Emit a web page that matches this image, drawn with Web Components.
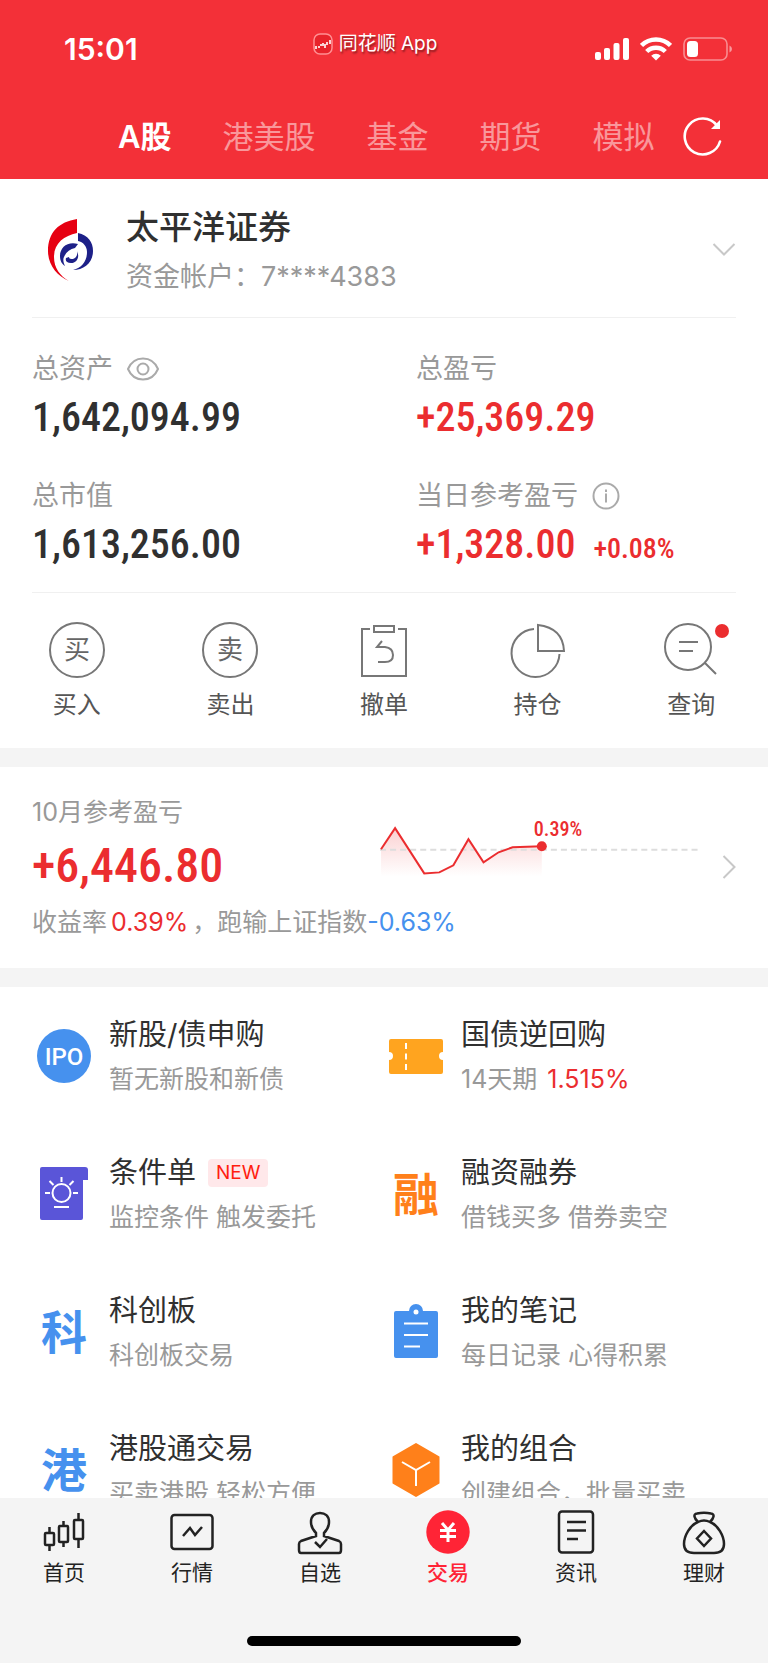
<!DOCTYPE html>
<html lang="zh-CN">
<head>
<meta charset="utf-8">
<meta name="viewport" content="width=device-width, initial-scale=1">
<title>交易</title>
<style>
  :root {
    --brand: #f33038;
    --up: #eb2d2f;
    --down: #4691ee;
    --ink: #303030;
    --muted: #999;
    --line: #f0f0f0;
    --band: #f4f4f4;
    --text: Inter, "Noto Sans CJK SC", sans-serif;
    --figures: "Roboto Condensed", Roboto, "Noto Sans CJK SC", sans-serif;
  }

  body {
    margin: 0;
    font-family: var(--text);
    color: var(--ink);
  }
</style>
</head>
<body>
<trade-page>
  <status-bar slot="header" time="15:01" app="同花顺 App"></status-bar>
  <market-tabs slot="header" items="A股,港美股,基金,期货,模拟"></market-tabs>

  <broker-card>
    <span slot="name">太平洋证券</span>
    <span slot="account">资金帐户：7****4383</span>
  </broker-card>

  <asset-grid>
    <asset-figure icon="eye">
      <span slot="label">总资产</span>1,642,094.99
    </asset-figure>
    <asset-figure trend="up">
      <span slot="label">总盈亏</span>+25,369.29
    </asset-figure>
    <asset-figure>
      <span slot="label">总市值</span>1,613,256.00
    </asset-figure>
    <asset-figure trend="up" icon="info">
      <span slot="label">当日参考盈亏</span>+1,328.00<span slot="extra">+0.08%</span>
    </asset-figure>
  </asset-grid>

  <action-row>
    <quick-action icon="buy">买入</quick-action>
    <quick-action icon="sell">卖出</quick-action>
    <quick-action icon="cancel">撤单</quick-action>
    <quick-action icon="position">持仓</quick-action>
    <quick-action icon="query" dot>查询</quick-action>
  </action-row>

  <profit-card>
    <span slot="label">10月参考盈亏</span>
    <span slot="value">+6,446.80</span>
    <span slot="rate">0.39%</span>
    <span slot="index">-0.63%</span>
  </profit-card>

  <feature-grid>
    <feature-item icon="ipo">新股/债申购<span slot="note">暂无新股和新债</span></feature-item>
    <feature-item icon="ticket">国债逆回购<span slot="note">14天期</span><span slot="rate">1.515%</span></feature-item>
    <feature-item icon="bulb" badge="NEW">条件单<span slot="note">监控条件 触发委托</span></feature-item>
    <feature-item icon="rong">融资融券<span slot="note">借钱买多 借券卖空</span></feature-item>
    <feature-item icon="ke">科创板<span slot="note">科创板交易</span></feature-item>
    <feature-item icon="notes">我的笔记<span slot="note">每日记录 心得积累</span></feature-item>
    <feature-item icon="gang">港股通交易<span slot="note">买卖港股 轻松方便</span></feature-item>
    <feature-item icon="cube">我的组合<span slot="note">创建组合，批量买卖</span></feature-item>
  </feature-grid>

  <tab-bar slot="footer">
    <tab-item icon="home">首页</tab-item>
    <tab-item icon="quotes">行情</tab-item>
    <tab-item icon="watch">自选</tab-item>
    <tab-item icon="trade" active>交易</tab-item>
    <tab-item icon="news">资讯</tab-item>
    <tab-item icon="wealth">理财</tab-item>
  </tab-bar>
</trade-page>

<script>
const base = `
  * {
    box-sizing: border-box;
  }

  :host {
    display: block;
  }

  svg {
    display: block;
    flex: none;
  }

  button {
    margin: 0;
    padding: 0;
    border: 0;
    background: none;
    font: inherit;
    color: inherit;
    cursor: pointer;
  }

  a {
    color: inherit;
    text-decoration: none;
  }
`;

// every element renders once, from its attributes
class BaseElement extends HTMLElement {
  constructor() {
    super();
    this.attachShadow({ mode: "open" });
  }

  connectedCallback() {
    this.shadowRoot.innerHTML = `<style>${base}${this.styles()}</style>${this.render()}`;
  }
}

class TradePage extends BaseElement {
  styles() {
    return `
      :host {
        display: flex;
        flex-direction: column;
        height: 100vh;
        background: #fff;
      }

      header {
        flex: none;
        padding-bottom: 3px;
        background: var(--brand);
        color: #fff;
      }

      main {
        flex: 1;
        min-height: 0;
        overflow-y: auto;
        scrollbar-width: none;
      }

      footer {
        flex: none;
      }
    `;
  }

  render() {
    return `
      <header><slot name="header"></slot></header>
      <main><slot></slot></main>
      <footer><slot name="footer"></slot></footer>
    `;
  }
}

class StatusBar extends BaseElement {
  styles() {
    return `
      :host {
        display: grid;
        grid-template-columns: 1fr auto 1fr;
        align-items: center;
        height: 98px;
        padding: 0 36px;
      }

      time {
        padding-left: 28px;
        font-size: 30px;
        font-weight: 600;
        line-height: 40px;
      }

      .app {
        display: flex;
        align-items: center;
        gap: 6px;
        padding: 0 18px 10px 0;
        font-size: 19px;
        line-height: 28px;
        text-shadow: 1px 2px 2px rgba(0, 0, 0, 0.45);
      }

      .signals {
        display: flex;
        justify-content: flex-end;
        align-items: center;
        gap: 11px;
      }
    `;
  }

  render() {
    return `
      <time>${this.getAttribute("time")}</time>
      <div class="app">
        <svg width="20" height="22" viewBox="0 0 20 22" fill="none">
          <rect x="1" y="1" width="18" height="20" rx="6" fill="#e8232b" stroke="#ff8f92" stroke-width="1.5"/>
          <path d="M3 13v3M6 13v2M8 11v2M10 10v3M12 11v4M14 9v3M17 7v4" stroke="#fff" stroke-width="1.6"/>
        </svg>
        <span>${this.getAttribute("app")}</span>
      </div>
      <div class="signals">
        <svg width="34" height="24" viewBox="0 0 34 24" fill="#fff">
          <rect x="0" y="15" width="6" height="8" rx="2"/>
          <rect x="9" y="11" width="6" height="12" rx="2"/>
          <rect x="18.500" y="6" width="6" height="17" rx="2"/>
          <rect x="28" y="1" width="6" height="22" rx="2"/>
        </svg>
        <svg width="32" height="24" viewBox="0 0 32 24" fill="none" stroke="#fff" stroke-width="4.500">
          <path d="M1.500 8.500a20.500 20.500 0 0 1 29 0"/>
          <path d="M6.700 14.500a13.200 13.200 0 0 1 18.600 0"/>
          <path d="M16 23.500l-4.800-4.800a6.800 6.800 0 0 1 9.600 0z" fill="#fff" stroke="none"/>
        </svg>
        <svg width="49" height="24" viewBox="0 0 49 24">
          <rect x="1" y="1" width="43" height="22" rx="6" fill="none" stroke="#fff" stroke-opacity=".45" stroke-width="1.600"/>
          <rect x="4" y="4" width="11" height="16" rx="3.500" fill="#fff"/>
          <path d="M46.500 8.500q2.500 1 2.500 3.500t-2.500 3.500z" fill="#fff" fill-opacity=".5"/>
        </svg>
      </div>
    `;
  }
}

class MarketTabs extends BaseElement {
  styles() {
    return `
      :host {
        display: flex;
        align-items: center;
        justify-content: space-between;
        height: 78px;
        padding: 0 45px 0 118px;
      }

      nav {
        display: flex;
        gap: 51px;
      }

      nav button {
        font-size: 31px;
        line-height: 44px;
        color: rgba(255, 255, 255, 0.5);
        white-space: nowrap;
      }

      nav button[aria-current] {
        color: #fff;
        font-weight: 600;
      }
    `;
  }

  render() {
    const tabs = this.getAttribute("items").split(",");
    return `
      <nav>
        ${tabs.map((name, i) => `<button type="button"${i ? "" : ' aria-current="page"'}>${name}</button>`).join("")}
      </nav>
      <button type="button" aria-label="刷新">
        <svg width="40" height="40" viewBox="0 0 40 40" fill="none" stroke="#fff" stroke-width="2.600">
          <path d="M37 24.500A18 18 0 1 1 34 8.500" stroke-linecap="round"/>
          <path d="M37 3v9h-9z" fill="#fff" stroke="none"/>
        </svg>
      </button>
    `;
  }
}

class BrokerCard extends BaseElement {
  styles() {
    return `
      .card {
        display: flex;
        align-items: center;
        margin: 0 32px;
        padding: 24px 0 14px;
        border-bottom: 1px solid var(--line);
      }

      .logo {
        margin: 0 32px 0 14px;
      }

      .who {
        flex: 1;
      }

      .name {
        font-size: 33px;
        font-weight: 500;
        line-height: 48px;
      }

      .account {
        font-size: 27px;
        line-height: 52px;
        color: var(--muted);
      }
    `;
  }

  render() {
    return `
      <div class="card">
        <svg class="logo" width="48" height="70" viewBox="0 0 48 70">
          <path fill="#e60012" d="M31 1v14C18 18 8 25 8 39c0 11 6 19 15 24C11 58 2 47 2 33 2 14 13 4 31 1z"/>
          <path fill="#1d2088" d="M32 15c10 2 15 9 15 18 0 12-9 19-20 19 9-2 14-9 14-18 0-6-4-10-9-11z"/>
          <path fill="#1d2088" d="M32 26c-10-3-18 3-18 12 0 5 2 8 5 10-2-4-2-7-1-9 2-5 6-8 11-9z"/>
          <path fill="#1d2088" d="M31 33c3 6 0 12-6 12-4 0-6-2-5-5l3-1c0 2 2 2 4 2 3-1 5-4 4-8z"/>
        </svg>
        <div class="who">
          <div class="name"><slot name="name"></slot></div>
          <div class="account"><slot name="account"></slot></div>
        </div>
        <button type="button" aria-label="切换账户">
          <svg width="24" height="24" viewBox="0 0 24 24" fill="none" stroke="#c8c8c8" stroke-width="2">
            <path d="M1.500 3L12 13.500 22.500 3"/>
          </svg>
        </button>
      </div>
    `;
  }
}

class AssetGrid extends BaseElement {
  styles() {
    return `
      .grid {
        display: grid;
        grid-template-columns: 1fr 1fr;
        row-gap: 34px;
        padding: 31px 0 23px;
      }

      .rule {
        margin: 0 32px;
        border-bottom: 1px solid var(--line);
      }
    `;
  }

  render() {
    return `<div class="grid"><slot></slot></div><div class="rule"></div>`;
  }
}

const figureIcons = {
  eye: ["显示资产", `
    <svg width="32" height="24" viewBox="0 0 32 24" fill="none" stroke="#aaa" stroke-width="2">
      <path d="M1 12C4 5 9.500 1.500 16 1.500S28 5 31 12c-3 7-8.500 10.500-15 10.500S4 19 1 12z"/>
      <circle cx="16" cy="12" r="5.500"/>
    </svg>`],
  info: ["说明", `
    <svg width="28" height="28" viewBox="0 0 28 28" fill="none" stroke="#aaa" stroke-width="2">
      <circle cx="14" cy="14" r="12.500"/>
      <path d="M14 11.500v9M14 7.500v2.500"/>
    </svg>`],
};

class AssetFigure extends BaseElement {
  styles() {
    return `
      :host {
        padding-left: 32px;
      }

      .label {
        display: flex;
        align-items: center;
        gap: 14px;
        margin-bottom: 5px;
        font-size: 27px;
        line-height: 40px;
        color: var(--muted);
      }

      .value {
        display: flex;
        align-items: baseline;
        gap: 18px;
        font-family: var(--figures);
        font-size: 40px;
        font-weight: 500;
        line-height: 48px;
      }

      .extra {
        font-size: 28px;
        line-height: 36px;
      }

      :host([trend="up"]) .value {
        color: var(--up);
      }
    `;
  }

  render() {
    const [name, svg] = figureIcons[this.getAttribute("icon")] || [];
    return `
      <div class="label">
        <slot name="label"></slot>
        ${svg ? `<button type="button" aria-label="${name}">${svg}</button>` : ""}
      </div>
      <div class="value">
        <span><slot></slot></span>
        <span class="extra"><slot name="extra"></slot></span>
      </div>
    `;
  }
}

class ActionRow extends BaseElement {
  styles() {
    return `
      :host {
        display: grid;
        grid-template-columns: repeat(5, 1fr);
        padding: 27px 0 26px;
      }
    `;
  }

  render() {
    return `<slot></slot>`;
  }
}

const actionIcons = {
  buy: `<circle cx="30" cy="30" r="27"/><text x="30" y="39">买</text>`,
  sell: `<circle cx="30" cy="30" r="27"/><text x="30" y="39">卖</text>`,
  cancel: `
    <path d="M16 9H8v47h44V9h-8"/>
    <rect x="20" y="6" width="20" height="6"/>
    <path d="M28 21l-5 6h8q8 1 8 8t-8 7h-7"/>`,
  position: `
    <path d="M26 9a24 24 0 1 0 25.500 25"/>
    <path d="M30 5v26h26Q55 8 30 5z"/>`,
  query: `
    <circle cx="27" cy="27" r="23"/>
    <path d="M44 43l11 11M18 22h19M18 31h14"/>`,
};

class QuickAction extends BaseElement {
  styles() {
    return `
      button {
        position: relative;
        display: flex;
        flex-direction: column;
        align-items: center;
        gap: 8px;
        margin: 0 auto;
        font-size: 24px;
        line-height: 34px;
        color: #555;
      }

      text {
        font-size: 26px;
        text-anchor: middle;
        fill: #666;
        stroke: none;
      }

      .dot {
        position: absolute;
        top: 4px;
        right: -8px;
        width: 14px;
        height: 14px;
        border-radius: 50%;
        background: var(--up);
      }
    `;
  }

  render() {
    return `
      <button type="button">
        <svg width="60" height="60" viewBox="0 0 60 60" fill="none" stroke="#777" stroke-width="2">
          ${actionIcons[this.getAttribute("icon")]}
        </svg>
        <span><slot></slot></span>
        ${this.hasAttribute("dot") ? `<i class="dot"></i>` : ""}
      </button>
    `;
  }
}

class ProfitCard extends BaseElement {
  styles() {
    return `
      :host {
        display: flex;
        align-items: center;
        gap: 20px;
        padding: 27px 32px 28px;
        border: solid var(--band);
        border-width: 19px 0;
      }

      .body {
        flex: 1;
      }

      .top {
        display: grid;
        grid-template-columns: 13fr 12fr;
        align-items: start;
      }

      .label {
        font-size: 25px;
        line-height: 36px;
        color: var(--muted);
      }

      .value {
        margin: 12px 0 14px;
        font-family: var(--figures);
        font-size: 48px;
        font-weight: 500;
        line-height: 48px;
        color: var(--up);
      }

      .summary {
        font-size: 25px;
        line-height: 36px;
        color: var(--muted);
      }

      .up {
        margin: 0 4px;
        color: var(--up);
      }

      .down {
        color: var(--down);
      }

      .chart {
        width: 100%;
        height: auto;
      }

      .chart text {
        font-family: var(--figures);
        font-size: 20px;
        font-weight: 500;
        fill: var(--up);
      }
    `;
  }

  render() {
    const line = "1,55 15,34 44,79 59,78 73,71 88,45 103,68 118,58 132,53 161,52";
    return `
      <div class="body">
        <div class="top">
          <div>
            <div class="label"><slot name="label"></slot></div>
            <div class="value"><slot name="value"></slot></div>
          </div>
          <svg class="chart" viewBox="0 0 320 96" fill="none">
            <linearGradient id="fade" x1="0" y1="0" x2="0" y2="1">
              <stop offset="0" stop-color="#eb2d2f" stop-opacity=".22"/>
              <stop offset="1" stop-color="#eb2d2f" stop-opacity="0"/>
            </linearGradient>
            <polygon points="${line} 161,82 1,82" fill="url(#fade)"/>
            <path d="M0 55.500h320" stroke="#ddd" stroke-width="2" stroke-dasharray="6 4"/>
            <polyline points="${line}" stroke="#eb2d2f" stroke-width="2"/>
            <circle cx="161" cy="52" r="5" fill="#eb2d2f"/>
            <text x="153" y="42">0.39%</text>
          </svg>
        </div>
        <div class="summary">收益率<span class="up"><slot name="rate"></slot></span>，跑输上证指数<span class="down"><slot name="index"></slot></span></div>
      </div>
      <button type="button" aria-label="查看详情">
        <svg width="14" height="26" viewBox="0 0 14 26" fill="none" stroke="#c8c8c8" stroke-width="2">
          <path d="M1.500 2L12.500 13 1.500 24"/>
        </svg>
      </button>
    `;
  }
}

class FeatureGrid extends BaseElement {
  styles() {
    return `
      :host {
        display: grid;
        grid-template-columns: 1fr 1fr;
        padding: 0 32px;
      }
    `;
  }

  render() {
    return `<slot></slot>`;
  }
}

const featureIcons = {
  ipo: `
    <circle cx="32" cy="32" r="27" fill="#4691ee"/>
    <text class="ipo" x="32" y="41">IPO</text>`,
  ticket: `
    <path fill="#ffa41f" d="M7 15h50q2 0 2 2v11a4 4 0 0 0 0 8v12q0 2-2 2H7q-2 0-2-2V36a4 4 0 0 0 0-8V17q0-2 2-2z"/>
    <path d="M22 19v27" stroke="#fff" stroke-width="2" stroke-dasharray="6 4.500"/>`,
  bulb: `
    <path fill="#5a55d8" d="M10 5h43q3 0 3 3v10h-5v38q0 2-2 2H10q-2 0-2-2V7q0-2 2-2z"/>
    <g fill="none" stroke="#fff" stroke-width="2">
      <circle cx="29.500" cy="31" r="9"/>
      <path d="M29.500 15v5M17.500 19l4 4M41.500 19l-4 4M13 31h5M41 31h5M22 45h15"/>
    </g>`,
  rong: `<text x="32" y="49" fill="#ff801a">融</text>`,
  ke: `<text x="32" y="49" fill="#4691ee">科</text>`,
  gang: `<text x="32" y="49" fill="#4691ee">港</text>`,
  notes: `
    <path fill="#4691ee" d="M12 11h13a7 7 0 0 1 14 0h13q2 0 2 2v43q0 2-2 2H12q-2 0-2-2V13q0-2 2-2z"/>
    <circle cx="32" cy="12" r="2.500" fill="#fff"/>
    <path d="M20 23.500h24M20 35h24M20 46.500h16" stroke="#fff" stroke-width="2"/>`,
  cube: `
    <path fill="#ff801a" stroke="#ff801a" stroke-width="2" stroke-linejoin="round" d="M32 6l22.500 13v26L32 58 9.500 45V19z"/>
    <path d="M18 24l14 8 14-8M32 32v16" fill="none" stroke="#fff" stroke-width="2"/>`,
};

class FeatureItem extends BaseElement {
  styles() {
    return `
      a {
        display: flex;
        align-items: center;
        gap: 13px;
        min-height: 138px;
      }

      text {
        font-size: 46px;
        font-weight: 700;
        text-anchor: middle;
      }

      .ipo {
        font-family: Roboto, sans-serif;
        font-size: 24px;
        font-weight: 500;
        fill: #fff;
      }

      .title {
        display: flex;
        align-items: center;
        gap: 12px;
        margin-bottom: 6px;
        font-size: 29px;
        line-height: 40px;
        white-space: nowrap;
      }

      .badge {
        padding: 0 8px;
        border-radius: 4px;
        background: #ffe8ea;
        font-size: 19px;
        line-height: 28px;
        color: #ff1e10;
      }

      .note {
        display: flex;
        gap: 10px;
        font-size: 25px;
        line-height: 36px;
        color: var(--muted);
        white-space: nowrap;
      }

      .up {
        color: var(--up);
      }
    `;
  }

  render() {
    const badge = this.getAttribute("badge");
    return `
      <a href="#">
        <svg width="64" height="64" viewBox="0 0 64 64">${featureIcons[this.getAttribute("icon")]}</svg>
        <div>
          <div class="title"><span><slot></slot></span>${badge ? `<span class="badge">${badge}</span>` : ""}</div>
          <div class="note"><slot name="note"></slot><span class="up"><slot name="rate"></slot></span></div>
        </div>
      </a>
    `;
  }
}

class TabBar extends BaseElement {
  styles() {
    return `
      :host {
        padding: 11px 0 17px;
        background: var(--band);
      }

      nav {
        display: grid;
        grid-template-columns: repeat(6, 1fr);
      }

      .home {
        width: 274px;
        height: 10px;
        margin: 49px auto 0;
        border-radius: 5px;
        background: #000;
      }
    `;
  }

  render() {
    return `<nav><slot></slot></nav><div class="home"></div>`;
  }
}

const tabIcons = {
  home: `
    <rect x="4" y="24" width="9" height="12" rx="1"/>
    <rect x="18" y="17" width="9" height="16" rx="1"/>
    <rect x="33" y="11" width="9" height="19" rx="1"/>
    <path d="M8.500 18v6M8.500 36v6M22.500 12v5M22.500 33v5M37.500 4v7M37.500 30v9"/>`,
  quotes: `
    <rect x="2.500" y="6" width="41" height="34" rx="3"/>
    <path d="M14 27l7-8 5 7 7-8"/>`,
  watch: `
    <path d="M19 27v-3c-4-4-5-8-5-11 0-6 4-9 9-9s9 3 9 9c0 3-1 7-5 11v3l15 5q2 1 2 3v6q0 3-2 3H4q-2 0-2-3v-6q0-2 2-3z"/>
    <path d="M18 33l5 5 7-8"/>`,
  trade: `
    <circle cx="23" cy="23" r="21.700" fill="#ff2436" stroke="none"/>
    <path d="M17 14l6 7 6-7M15 21.500h16M15 27.500h16M23 21v12" stroke="#fff" stroke-width="3"/>`,
  news: `
    <rect x="6" y="2.500" width="34" height="41" rx="3"/>
    <path d="M14 13h19M14 21.500h19M14 30h11"/>`,
  wealth: `
    <path d="M17 13c-4-4-5-8-1-8.500q7-1.500 14 0c4 .5 3 4.500-1 8.500M17 13Q23 10 29 13C37 16 43 27 43 35c0 7-4 9-10 9H13c-6 0-10-2-10-9 0-8 6-19 14-22z"/>
    <path d="M23 22l7 7.500-7 7.500-7-7.500z"/>`,
};

class TabItem extends BaseElement {
  styles() {
    return `
      a {
        display: flex;
        flex-direction: column;
        align-items: center;
        gap: 4px;
        font-size: 21px;
        line-height: 28px;
        color: #222;
      }

      :host([active]) a {
        color: #ff2436;
        font-weight: 500;
      }
    `;
  }

  render() {
    return `
      <a href="#">
        <svg width="46" height="46" viewBox="0 0 46 46" fill="none" stroke="#222" stroke-width="2.500">
          ${tabIcons[this.getAttribute("icon")]}
        </svg>
        <span><slot></slot></span>
      </a>
    `;
  }
}

customElements.define("trade-page", TradePage);
customElements.define("status-bar", StatusBar);
customElements.define("market-tabs", MarketTabs);
customElements.define("broker-card", BrokerCard);
customElements.define("asset-grid", AssetGrid);
customElements.define("asset-figure", AssetFigure);
customElements.define("action-row", ActionRow);
customElements.define("quick-action", QuickAction);
customElements.define("profit-card", ProfitCard);
customElements.define("feature-grid", FeatureGrid);
customElements.define("feature-item", FeatureItem);
customElements.define("tab-bar", TabBar);
customElements.define("tab-item", TabItem);
</script>
</body>
</html>
